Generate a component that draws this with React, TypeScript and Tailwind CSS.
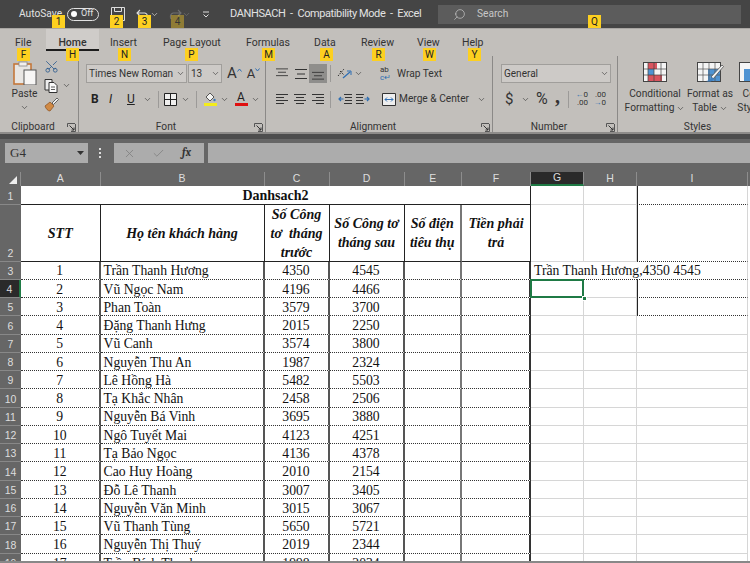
import { Search, ChevronDown, Check, X, Scissors } from "lucide-react";

const rows: [string, string, string][] = [
  ["Trần Thanh Hương", "4350", "4545"],
  ["Vũ Ngọc Nam", "4196", "4466"],
  ["Phan Toàn", "3579", "3700"],
  ["Đặng Thanh Hưng", "2015", "2250"],
  ["Vũ Canh", "3574", "3800"],
  ["Nguyễn Thu An", "1987", "2324"],
  ["Lê Hồng Hà", "5482", "5503"],
  ["Tạ Khắc Nhân", "2458", "2506"],
  ["Nguyễn Bá Vinh", "3695", "3880"],
  ["Ngô Tuyết Mai", "4123", "4251"],
  ["Tạ Bảo Ngọc", "4136", "4378"],
  ["Cao Huy Hoàng", "2010", "2154"],
  ["Đỗ Lê Thanh", "3007", "3405"],
  ["Nguyễn Văn Minh", "3015", "3067"],
  ["Vũ Thanh Tùng", "5650", "5721"],
  ["Nguyễn Thị Thuý", "2019", "2344"],
  ["Trần Bích Thanh", "1998", "2034"],
];

const keytips = [
  { label: "1", cls: "left-[52px] top-[15px]" },
  { label: "2", cls: "left-[110px] top-[15px]" },
  { label: "3", cls: "left-[138px] top-[15px]" },
  { label: "4", cls: "left-[171px] top-[15px] opacity-40" },
  { label: "Q", cls: "left-[588px] top-[15px]" },
  { label: "F", cls: "left-[17px] top-[48px]" },
  { label: "H", cls: "left-[66px] top-[48px]" },
  { label: "N", cls: "left-[118px] top-[48px]" },
  { label: "P", cls: "left-[185px] top-[48px]" },
  { label: "M", cls: "left-[262px] top-[48px]" },
  { label: "A", cls: "left-[320px] top-[48px]" },
  { label: "R", cls: "left-[372px] top-[48px]" },
  { label: "W", cls: "left-[423px] top-[48px]" },
  { label: "Y", cls: "left-[468px] top-[48px]" },
];

function Chevron({ className = "" }: { className?: string }) {
  return <ChevronDown size={9} strokeWidth={1.6} className={`text-[#333] shrink-0 ${className}`} />;
}

function Launcher({ className = "" }: { className?: string }) {
  return (
    <svg width="9" height="9" viewBox="0 0 9 9" className={className} fill="none" stroke="#555">
      <path d="M.5 4V.5H8M8.5 1V8.5H4" />
      <path d="M2.5 2.5 7 7M7 4.5V7H4.5" stroke="#333" />
    </svg>
  );
}

function Lines({ rows, className = "" }: { rows: [number, number][]; className?: string }) {
  // rows: x1, x2 of each horizontal stroke
  return (
    <svg width="14" height="14" viewBox="0 0 14 14" className={className} stroke="#333" strokeWidth="1">
      {rows.map(([a, b], i) => (
        <line key={i} x1={a} x2={b} y1={2.5 + (i * 9) / (rows.length - 1)} y2={2.5 + (i * 9) / (rows.length - 1)} />
      ))}
    </svg>
  );
}

function Indent({ flip = false, className = "" }: { flip?: boolean; className?: string }) {
  return (
    <svg width="14" height="14" viewBox="0 0 14 14" className={`${flip ? "-scale-x-100" : ""} ${className}`} fill="none">
      <path d="M6 2.500h8M7 5.500h7M7 8.500h7M6 11.500h8" stroke="#333" />
      <path d="M5.500 7H1M3 5L1 7l2 2" stroke="#2f6fb3" strokeWidth="1.200" />
    </svg>
  );
}

function Group({
  width,
  label,
  launcher = true,
  children,
}: {
  width: string;
  label: string;
  launcher?: boolean;
  children: React.ReactNode;
}) {
  return (
    <div className={`${width} shrink-0 flex flex-col border-r border-[#8b8987] h-[77px] relative`}>
      <div className="h-[64px] shrink-0">{children}</div>
      <div className={`text-center text-[10.2px] leading-[13px] text-[#333] ${launcher ? "pr-[12px]" : ""}`}>{label}</div>
      {launcher && <Launcher className="absolute right-[2px] bottom-[1px]" />}
    </div>
  );
}

function Combo({ text, className }: { text: string; className: string }) {
  return (
    <div className={`h-[19px] bg-[#cdcac7] border border-[#a09e9b] flex items-center justify-between pl-[2px] pr-[1px] text-[10px] text-[#333] ${className}`}>
      <span className="whitespace-nowrap">{text}</span>
      <Chevron />
    </div>
  );
}

function Clipboard() {
  return (
    <div className="flex h-full">
      <div className="w-[46px] flex flex-col items-center pt-[5px] pl-[3px]">
        <svg width="24" height="24" viewBox="0 0 24 24">
          <rect x="1" y="3" width="17" height="20" fill="#e8e6e3" stroke="#c4773a" strokeWidth="1.6" />
          <rect x="6" y="1" width="8" height="4" fill="#f2f0ee" stroke="#888" strokeWidth=".8" />
          <rect x="11" y="9" width="12" height="15" fill="#f7f6f5" stroke="#555" />
        </svg>
        <span className="text-[10.2px] leading-[14px] mt-[2px] text-[#333]">Paste</span>
        <Chevron className="mt-[2px]" />
      </div>
      <div className="flex flex-col items-start pt-[3px] gap-[3px]">
        <Scissors size={15} strokeWidth={1.3} className="text-[#2a5a8f] ml-[-2px] rotate-[-90deg]" />
        <div className="flex items-center gap-[3px] ml-[-2px] mt-[1px]">
          <svg width="15" height="15" viewBox="0 0 15 15" fill="none" stroke="#333">
            <path d="M1 1.5h7V12H1z" fill="#eee" />
            <path d="M5 4.5h5l3 3v7H5z" fill="#fafafa" />
            <path d="M7 9h4M7 11.500h4" strokeWidth=".8" />
          </svg>
          <Chevron />
        </div>
        <svg width="15" height="15" viewBox="0 0 15 15" className="ml-[-2px] mt-[1px]">
          <path d="M1 9l5-4 4 4-4 5c-2 0-4-2-5-5z" fill="#d08a45" stroke="#8a4e1c" strokeWidth=".7" />
          <path d="M8 6l5-5 1.500 1.500-5 5z" fill="#eee" stroke="#444" strokeWidth=".8" />
        </svg>
      </div>
    </div>
  );
}

function FontPanel() {
  return (
    <div className="pt-[8px] pl-[7px]">
      <div className="flex items-center">
        <Combo text="Times New Roman" className="w-[101px]" />
        <Combo text="13" className="w-[34px] ml-[1px]" />
        <span className="ml-[5px] text-[15px] leading-none text-[#333]">A</span>
        <svg width="5" height="4" viewBox="0 0 5 4" className="mb-[8px]" fill="none" stroke="#2f6fb3"><path d="M.5 3.500l2-2.500 2 2.500" /></svg>
        <span className="ml-[5px] text-[13px] leading-none text-[#333]">A</span>
        <svg width="5" height="4" viewBox="0 0 5 4" className="mb-[8px]" fill="none" stroke="#2f6fb3"><path d="M.5.500l2 2.500 2-2.500" /></svg>
      </div>
      <div className="flex items-center h-[20px] mt-[6px] pl-[5px] text-[#222]">
        <span className="w-[18px] text-[12px] font-bold">B</span>
        <span className="w-[18px] text-[12px] italic">I</span>
        <span className="w-[11px] text-[12px] underline">U</span>
        <Chevron className="ml-[5px]" />
        <div className="w-px h-[17px] bg-[#9c9a98] ml-[6px]" />
        <svg width="13" height="13" viewBox="0 0 13 13" className="ml-[5px]" fill="#f0efee" stroke="#222">
          <path d="M.5.5h12v12H.5zM6.500.5v12M.5 6.500h12" />
        </svg>
        <Chevron className="ml-[4px]" />
        <div className="w-px h-[17px] bg-[#9c9a98] ml-[6px]" />
        <div className="ml-[6px] flex flex-col items-center w-[14px]">
          <svg width="12" height="10" viewBox="0 0 12 10">
            <path d="M2 5l4-4 4 4-4 4z" fill="#f4f4f2" stroke="#333" strokeWidth=".8" />
            <circle cx="10.500" cy="8" r="1.200" fill="#3b76b5" />
          </svg>
          <div className="w-[13px] h-[3px] bg-[#f4ec1a] mt-px" />
        </div>
        <Chevron className="ml-[3px]" />
        <div className="ml-[5px] flex flex-col items-center w-[14px]">
          <span className="text-[12px] leading-[10px] text-[#222]">A</span>
          <div className="w-[13px] h-[3px] bg-[#e01010] mt-px" />
        </div>
        <Chevron className="ml-[3px]" />
      </div>
    </div>
  );
}

function Alignment() {
  const top: [number, number][] = [[1, 13], [3, 11], [1, 13]];
  const left: [number, number][] = [[1, 13], [1, 9], [1, 13], [1, 9]];
  const center: [number, number][] = [[1, 13], [3, 11], [1, 13], [3, 11]];
  const right: [number, number][] = [[1, 13], [5, 13], [1, 13], [5, 13]];
  return (
    <div className="pt-[8px] pl-[9px]">
      <div className="flex items-center h-[19px]">
        <Lines rows={top} className="scale-y-75 origin-top" />
        <Lines rows={top} className="ml-[5px]" />
        <div className="ml-[1px] w-[18px] h-[19px] bg-[#8f8e8c] flex items-center justify-center">
          <Lines rows={top} className="scale-y-75 origin-bottom" />
        </div>
        <div className="w-px h-[17px] bg-[#9c9a98] ml-[3px]" />
        <svg width="15" height="14" viewBox="0 0 15 14" className="ml-[6px]" fill="none" stroke="#333">
          <path d="M1 9l6-7M3 4l4 4" strokeDasharray="1.500 1" />
          <path d="M6 11l7-6" stroke="#2f6fb3" strokeWidth="1.300" />
          <path d="M10 4h4v4" stroke="#2f6fb3" />
        </svg>
        <Chevron className="ml-[2px]" />
        <div className="ml-[17px] w-[14px] h-[16px] relative text-[8px] leading-[8px] text-[#333]">
          <span>ab</span>
          <div className="text-[#2f6fb3]">c↵</div>
        </div>
        <span className="ml-[3px] text-[10.2px] text-[#333] whitespace-nowrap">Wrap Text</span>
      </div>
      <div className="flex items-center h-[20px] mt-[6px]">
        <Lines rows={left} />
        <Lines rows={center} className="ml-[4px]" />
        <Lines rows={right} className="ml-[4px]" />
        <div className="w-px h-[17px] bg-[#9c9a98] ml-[5px]" />
        <Indent className="ml-[7px]" />
        <Indent flip className="ml-[4px]" />
        <svg width="14" height="13" viewBox="0 0 14 13" className="ml-[12px]" fill="#eee" stroke="#333">
          <path d="M.5.5h13v12H.5z" />
          <path d="M3 6.500h8M5 4.500l-2 2 2 2M9 4.500l2 2-2 2" stroke="#2f6fb3" fill="none" />
        </svg>
        <span className="ml-[3px] text-[10.2px] text-[#333] whitespace-nowrap">Merge &amp; Center</span>
        <Chevron className="ml-[8px]" />
      </div>
    </div>
  );
}

function NumberPanel() {
  return (
    <div className="pt-[8px] pl-[8px]">
      <Combo text="General" className="w-[110px]" />
      <div className="flex items-center h-[20px] mt-[6px] pl-[4px] text-[#333]">
        <span className="text-[15px] w-[10px]">$</span>
        <Chevron className="ml-[6px]" />
        <span className="text-[16px] ml-[6px] leading-none w-[14px]">%</span>
        <span className="text-[20px] font-bold ml-[5px] leading-none w-[5px] -mt-[6px]" style={{ fontFamily: "Liberation Serif" }}>,</span>
        <div className="w-px h-[17px] bg-[#9c9a98] ml-[8px]" />
        <div className="ml-[5px] text-[8px] leading-[8px] w-[14px] text-right">
          <div><span className="text-[#2f6fb3]">←</span>0</div>
          <div>.00</div>
        </div>
        <div className="ml-[4px] text-[8px] leading-[8px] w-[14px] text-right">
          <div>.00</div>
          <div><span className="text-[#2f6fb3]">→</span>0</div>
        </div>
      </div>
    </div>
  );
}

function Styles() {
  return (
    <div className="flex pt-[6px] text-[10.2px] leading-[14px] text-center text-[#333]">
      <div className="w-[72px] ml-[1px] flex flex-col items-center shrink-0">
        <svg width="24" height="20" viewBox="0 0 24 20">
          <rect x=".5" y=".5" width="23" height="19" fill="#f5f5f5" stroke="#444" />
          <rect x="5" y="1" width="9" height="6" fill="#d9555f" />
          <rect x="5" y="7" width="6" height="6" fill="#4f93d2" />
          <rect x="5" y="13" width="14" height="6" fill="#d9555f" />
          <path d="M5 .5v19M11 .5v19M18 .5v19M.5 7h23M.5 13h23" stroke="#444" strokeWidth=".7" />
        </svg>
        <span className="mt-[5px] whitespace-nowrap">Conditional</span>
        <span className="whitespace-nowrap flex items-center">Formatting<Chevron className="ml-[2px]" /></span>
      </div>
      <div className="w-[50px] ml-[-6px] flex flex-col items-center shrink-0">
        <svg width="27" height="20" viewBox="0 0 27 20">
          <rect x=".5" y=".5" width="23" height="19" fill="#f5f5f5" stroke="#444" />
          <rect x="11" y="7" width="12" height="12" fill="#4f93d2" />
          <path d="M6 .5v19M12 .5v19M18 .5v19M.5 7h23M.5 13h23" stroke="#555" strokeWidth=".7" />
          <path d="M14 15L25 3l1.500 1.500L16 17z" fill="#f2f2f2" stroke="#444" strokeWidth=".7" />
          <path d="M9 19c2 0 4-1 6-4l2 2c-2 3-5 3-8 2z" fill="#3f7fc0" />
        </svg>
        <span className="mt-[5px] whitespace-nowrap">Format as</span>
        <span className="whitespace-nowrap flex items-center">Table<Chevron className="ml-[2px]" /></span>
      </div>
      <div className="ml-[1px] flex flex-col items-center w-[30px] shrink-0">
        <svg width="24" height="20" viewBox="0 0 24 20">
          <rect x=".5" y=".5" width="23" height="19" fill="#f5f5f5" stroke="#444" />
          <rect x="5" y="7" width="19" height="12" fill="#4f93d2" />
        </svg>
        <span className="mt-[5px]">Cell</span>
        <span>Styles</span>
      </div>
    </div>
  );
}

function Cell({ className = "", children }: { className?: string; children?: React.ReactNode }) {
  return <div className={`flex items-center min-w-0 ${className}`}>{children}</div>;
}

const colHead = "flex items-center justify-center border-r border-[#8d8d8d] text-[10.5px] text-[#dedede]";
const rowHead = "flex items-end justify-center pb-px border-b border-[#888] text-[10.5px] text-[#dedede] leading-[14px]";
const dotted = "border-b border-b-[#333] [border-bottom-style:dotted]";
const grid = "border-r border-b border-[#d6d6d6]";
const head = "justify-center text-center font-bold italic text-[14px] leading-[19px] border-r border-b border-[#222] pt-px";
const vline = "border-r-2 border-r-[#555]";
const iCell = "border-l border-l-[#222] border-r border-r-[#d6d6d6]";
const sans = { fontFamily: "Liberation Sans" };

export default function App() {
  return (
    <div className="relative w-[750px] h-[563px] overflow-hidden bg-white" style={{ fontFamily: 'Roboto, sans-serif' }}>
      {/* Title bar */}
      <div className="h-[28px] bg-[#454545] flex items-center text-[#e2e2e2] text-[10.2px]">
        <span className="ml-[19px] w-[48px]">AutoSave</span>
        <div className="w-[32px] h-[13px] rounded-full border border-[#e2e2e2] flex items-center pl-[3px] text-[9px] gap-[4px]">
          <div className="w-[6px] h-[6px] rounded-full bg-white" />
          Off
        </div>
        <svg width="14" height="14" viewBox="0 0 14 14" className="ml-[12px]" fill="none" stroke="#ddd">
          <path d="M.5.5h13v13H.5zM3.500.5v4h7v-4M3.500 13.500v-5h7v5" />
        </svg>
        <svg width="14" height="12" viewBox="0 0 14 12" className="ml-[11px]" fill="none" stroke="#ddd" strokeWidth="1.100">
          <path d="M1 5h8a4 4 0 0 1 2 6M4 2L1 5l3 3" />
        </svg>
        <ChevronDown size={9} className="text-[#ccc]" />
        <svg width="14" height="12" viewBox="0 0 14 12" className="ml-[9px]" fill="none" stroke="#707070" strokeWidth="1.100">
          <path d="M13 5H5a4 4 0 0 0-2 6M10 2l3 3-3 3" />
        </svg>
        <ChevronDown size={9} className="text-[#707070]" />
        <svg width="10" height="10" viewBox="0 0 10 10" className="ml-[10px]" fill="none" stroke="#ddd">
          <path d="M2 3h6M2.500 5.500L5 8l2.500-2.500" />
        </svg>
        <span className="ml-[19px] w-[208px] whitespace-pre text-[11px] tracking-[-0.4px]">DANHSACH  -  Compatibility Mode  -  Excel</span>
        <div className="w-[303px] h-[19px] bg-[#5c5c5c] flex items-center pl-[15px] text-[#c8c8c8]">
          <Search size={13} strokeWidth={1.3} className="-scale-x-100" />
          <span className="ml-[11px]">Search</span>
        </div>
      </div>

      {/* Ribbon */}
      <div className="h-[106px] bg-[#c2bfbb] border-t border-[#a9a6a3] border-b-2 border-b-[#8e8c8a]">
        <div className="h-[27px] flex items-start text-[10.5px] text-[#333] pl-[15px]">
          <span className="mt-[6px] w-[31px]">File</span>
          <div className="w-[53px] h-[22px] bg-[#cfccc9] border-b-2 border-[#1c1c1c] pt-[6px] text-center font-medium">Home</div>
          <span className="mt-[6px] ml-[11px] w-[53px]">Insert</span>
          <span className="mt-[6px] w-[83px]">Page Layout</span>
          <span className="mt-[6px] w-[68px]">Formulas</span>
          <span className="mt-[6px] w-[47px]">Data</span>
          <span className="mt-[6px] w-[56px]">Review</span>
          <span className="mt-[6px] w-[45px]">View</span>
          <span className="mt-[6px]">Help</span>
        </div>
        <div className="flex">
          <Group width="w-[79px]" label="Clipboard"><Clipboard /></Group>
          <Group width="w-[187px]" label="Font"><FontPanel /></Group>
          <Group width="w-[227px]" label="Alignment"><Alignment /></Group>
          <Group width="w-[125px]" label="Number"><NumberPanel /></Group>
          <Group width="w-[160px]" label="Styles" launcher={false}><Styles /></Group>
        </div>
      </div>

      {/* Formula bar */}
      <div className="h-[38px] bg-[#666] border-t-[5px] border-[#4d4d4d] pt-[4px]">
        <div className="flex items-center h-[20px]">
          <div className="ml-[5px] w-[83px] h-[20px] bg-[#acacac] flex items-center justify-between pl-[5px] pr-[4px] text-[13px] text-[#333]" style={{ fontFamily: "Liberation Serif" }}>
            G4
            <svg width="7" height="4" viewBox="0 0 7 4" fill="#333"><path d="M0 0h7L3.500 4z" /></svg>
          </div>
          <div className="w-[2px] h-[10px] ml-[11px] border-l-2 border-dotted border-[#ddd]" />
          <div className="ml-[13px] w-[90px] h-[20px] bg-[#acacac] flex items-center pl-[9px] text-[#808080] gap-[16px]">
            <X size={13} strokeWidth={1.5} />
            <Check size={13} strokeWidth={1.5} />
            <span className="italic font-bold text-[#333] text-[11px] font-serif ml-[1px]">fx</span>
          </div>
          <div className="ml-[4px] flex-1 h-[20px] bg-[#acacac]" />
        </div>
      </div>

      {/* Sheet */}
      <div
        className="grid grid-cols-[21px_79.500px_164px_65px_75px_57.500px_69px_53px_53px_111px_2px] grid-rows-[14px_18.500px_57px_repeat(17,18.270px)] h-[391px] text-[13.700px] text-[#111] border-b-2 border-[#888] overflow-hidden"
        style={{ fontFamily: '"Liberation Serif", serif' }}
      >
        {/* Column headers */}
        <div className="bg-[#666] flex items-end justify-end pr-[3px] pb-[2px] border-r border-[#8d8d8d]">
          <div className="w-0 h-0 border-l-[8px] border-l-transparent border-b-[8px] border-b-[#eee]" />
        </div>
        {["A", "B", "C", "D", "E", "F"].map((c) => (
          <div key={c} className={`${colHead} bg-[#666]`} style={sans}>{c}</div>
        ))}
        <div className={`${colHead} bg-[#2a2a2a] border-b-2 border-b-[#1f7a45]`} style={sans}>G</div>
        {["H", "I"].map((c) => (
          <div key={c} className={`${colHead} bg-[#666]`} style={sans}>{c}</div>
        ))}
        <div className="bg-[#666]" />

        {/* Row 1 */}
        <div className={`${rowHead} bg-[#666]`} style={sans}>1</div>
        <Cell className="col-span-6 justify-center font-bold text-[14px] border-r border-b border-[#222] pt-px">Danhsach2</Cell>
        <Cell className={grid} />
        <Cell className={grid} />
        <Cell className={`${iCell} ${dotted}`} />
        <Cell />

        {/* Row 2 */}
        <div className={`${rowHead} bg-[#666]`} style={sans}>2</div>
        <Cell className={head}>STT</Cell>
        <Cell className={head}>Họ tên khách hàng</Cell>
        <Cell className={`${head} px-[3px]`}>Số Công tơ&nbsp; tháng trước</Cell>
        <Cell className={`${head} px-[3px]`}>Số Công tơ tháng sau</Cell>
        <Cell className={`${head} px-[3px] border-r-2 border-r-[#777]`}>Số điện tiêu thụ</Cell>
        <Cell className={`${head} px-[3px]`}>Tiền phải trả</Cell>
        <Cell className={grid} />
        <Cell className={grid} />
        <Cell className={`${iCell} ${dotted}`} />
        <Cell />

        {/* Data rows */}
        {rows.map(([name, prev, next], i) => {
          const n = i + 3;
          return [
            <div key={`h${n}`} className={`${rowHead} ${n === 4 ? "bg-[#2a2a2a] border-r-2 border-r-[#1f7a45]" : "bg-[#666]"}`} style={sans}>{n}</div>,
            <Cell key={`a${n}`} className={`justify-center pt-[3px] ${vline} ${dotted}`}>{i + 1}</Cell>,
            <Cell key={`b${n}`} className={`pl-[3px] pt-[3px] whitespace-nowrap ${vline} ${dotted}`}>{name}</Cell>,
            <Cell key={`c${n}`} className={`justify-center pt-[3px] ${vline} ${dotted}`}>{prev}</Cell>,
            <Cell key={`d${n}`} className={`justify-center pt-[3px] ${vline} ${dotted}`}>{next}</Cell>,
            <Cell key={`e${n}`} className={`border-r-2 border-r-[#777] ${dotted}`} />,
            <Cell key={`f${n}`} className={`border-r-2 border-r-[#333] ${dotted}`} />,
            n === 3 ? (
              <Cell key="g3" className={`pl-[3px] pt-[3px] whitespace-nowrap ${dotted}`}>Trần Thanh Hương,4350 4545</Cell>
            ) : n === 4 ? (
              <div key="g4" className="relative">
                <div className="absolute inset-0 -top-px -left-px border-2 border-[#1f7a45]" />
                <div className="absolute -right-[3px] -bottom-[3px] w-[5px] h-[5px] bg-[#1f7a45] border border-white" />
              </div>
            ) : (
              <Cell key={`g${n}`} className={grid} />
            ),
            <Cell key={`h_${n}`} className={n === 3 ? dotted : grid} />,
            n <= 5 ? (
              <Cell key={`i${n}`} className={`${n === 3 ? "border-r border-r-[#d6d6d6]" : iCell} ${dotted}`} />
            ) : (
              <Cell key={`i${n}`} className={grid} />
            ),
            <Cell key={`j${n}`} />,
          ];
        })}
      </div>

      {/* Keytips */}
      {keytips.map((k) => (
        <div key={k.label} className={`absolute w-[13px] h-[13px] bg-[#fdd020] flex items-center justify-center text-[10px] text-[#222] ${k.cls}`}>
          {k.label}
        </div>
      ))}
    </div>
  );
}
